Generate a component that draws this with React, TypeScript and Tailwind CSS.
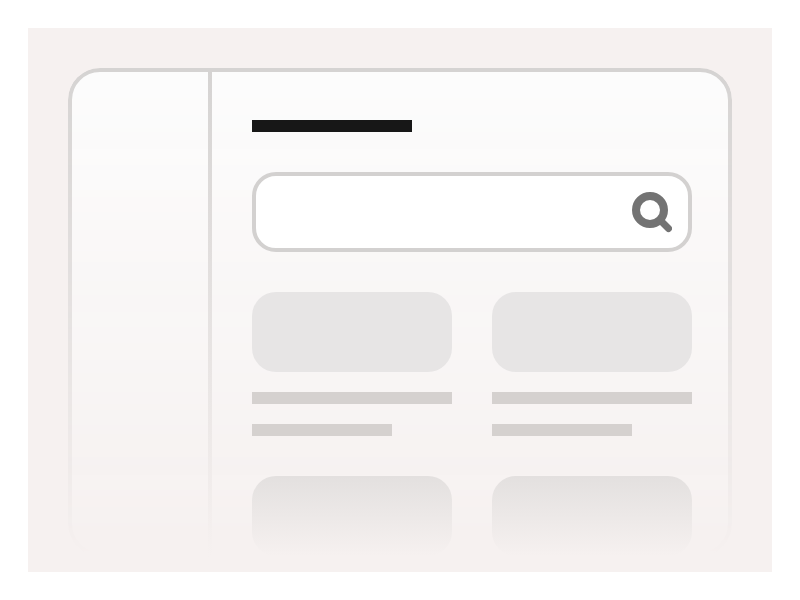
const cards = [0, 1];

const App = () => {
  return (
    <div className="h-[600px] w-[800px] overflow-hidden bg-white p-7">
      <div className="h-[544px] overflow-hidden bg-[#f6f1f0] px-10 pt-10">
        <div className="relative flex h-[488px]">
          {/* frame background and border fade out towards the bottom */}
          <div className="absolute inset-0 rounded-[32px] border-4 border-[#d5d3d2] bg-[#fcfcfc] [mask-image:linear-gradient(to_bottom,black,transparent)]"></div>

          <div className="relative w-[140px] shrink-0"></div>
          <div className="relative h-[504px] w-1 shrink-0 bg-gradient-to-b from-[#d5d3d2] from-0% to-[#f6f1f0] to-[97%]"></div>

          <div className="relative flex-1 px-10 pt-[52px]">
            <div className="h-3 w-40 bg-[#171717]"></div>
            <div className="mt-10 flex h-20 items-center justify-end rounded-[24px] border-4 border-[#d3d1d0] bg-white pr-4">
              <svg width="40" height="44" viewBox="0 0 40 44" fill="none" stroke="#737373" strokeLinecap="round">
                <circle cx="18" cy="20" r="14" strokeWidth="8" />
                <path d="M28 30l8.5 8.5" strokeWidth="7" />
              </svg>
            </div>
            <div className="mt-10 grid grid-cols-2 gap-x-10">
              {cards.map((c) => (
                <div key={c}>
                  <div className="h-20 rounded-[24px] bg-[#e7e5e5]"></div>
                  <div className="mt-5 h-3 bg-[#d5d1cf]"></div>
                  <div className="mt-5 h-3 w-[140px] bg-[#d5d1cf]"></div>
                  <div className="mt-10 h-20 rounded-[24px] bg-gradient-to-b from-[#e3e0df] to-[#f6f1f0]"></div>
                </div>
              ))}
            </div>
          </div>
        </div>
      </div>
    </div>
  );
};

export default App;
